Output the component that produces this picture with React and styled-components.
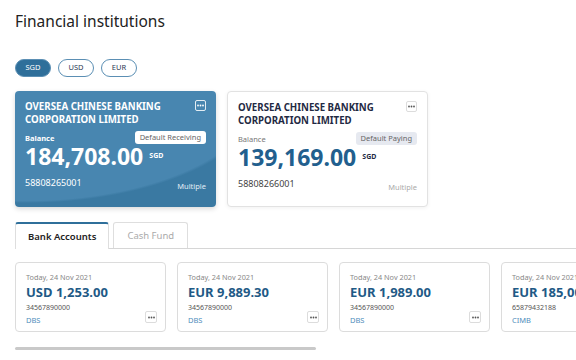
import styled, { createGlobalStyle, css } from 'styled-components'

const Global = createGlobalStyle`
  body {
    margin: 0;
    background: #ffffff;
    font-family: 'Noto Sans', 'DejaVu Sans', sans-serif;
    overflow: hidden;
  }
`

const Page = styled.main`
  width: 576px;
  height: 360px;
  box-sizing: border-box;
  padding: 10px 0 0 15px;
  overflow: hidden;
`

const Title = styled.h1`
  margin: 0;
  font-size: 15.5px;
  font-weight: 400;
  color: #222;
  line-height: 22px;
`

const Pills = styled.div`
  display: flex;
  gap: 7px;
  margin-top: 27px;
`

const Pill = styled.button`
  width: 36px;
  height: 18px;
  border-radius: 9px;
  border: 1.5px solid #5b8fb4;
  background: ${p => (p.$active ? '#2f6f9a' : '#fff')};
  color: ${p => (p.$active ? '#fff' : '#2b3a55')};
  font-family: inherit;
  font-size: 7.5px;
  line-height: 1;
  padding: 0;
`

const Cards = styled.div`
  display: flex;
  gap: 11px;
  margin-top: 14px;
`

const Card = styled.div`
  width: 201px;
  height: 116px;
  box-sizing: border-box;
  border-radius: 4px;
  padding: 8px 10px 0 10px;
  overflow: hidden;
  ${p =>
    p.$primary
      ? css`
          background: radial-gradient(ellipse 240px 112px at 10px 0px, #4886b0 98%, #3a79a2 100%);
          box-shadow: 0 2px 5px rgba(0, 0, 0, 0.15);
          color: #fff;
        `
      : css`
          background: #fff;
          border: 1px solid #e2e2e2;
          box-shadow: 0 1px 4px rgba(0, 0, 0, 0.06);
          color: #1f2a44;
        `}
`

const CardHead = styled.div`
  display: flex;
  justify-content: space-between;
  align-items: flex-start;
  height: 26px;
`

const BankName = styled.div`
  font-size: 9.7px;
  font-weight: 700;
  line-height: 13px;
  margin-top: 1px;
`

const DotsBox = styled.span`
  display: inline-flex;
  align-items: center;
  justify-content: center;
  width: ${p => p.$size || 11}px;
  height: ${p => p.$size || 11}px;
  border-radius: 2px;
  box-sizing: border-box;
  border: 1px solid ${p => (p.$light ? 'rgba(255,255,255,0.85)' : '#dcdcdc')};
  color: ${p => (p.$light ? '#fff' : '#555')};
  background: ${p => (p.$light ? 'transparent' : '#fff')};
  flex-shrink: 0;
  margin-top: ${p => (p.$size ? 0 : 1)}px;
`

const Dots = ({ light, size }) => (
  <DotsBox $light={light} $size={size}>
    <svg width="7" height="3" viewBox="0 0 7 3">
      <circle cx="1" cy="1.5" r="0.9" fill="currentColor" />
      <circle cx="3.5" cy="1.5" r="0.9" fill="currentColor" />
      <circle cx="6" cy="1.5" r="0.9" fill="currentColor" />
    </svg>
  </DotsBox>
)

const BalanceRow = styled.div`
  display: flex;
  justify-content: space-between;
  align-items: center;
  margin-top: 6px;
  height: 13px;
`

const Label = styled.span`
  font-size: 7.5px;
  line-height: 10px;
  font-weight: ${p => (p.$light ? 700 : 400)};
  color: ${p => (p.$light ? '#fff' : '#777')};
`

const Badge = styled.span`
  font-size: 7.5px;
  line-height: 9px;
  padding: 2px 5px;
  border-radius: 3px;
  background: ${p => (p.$light ? '#fff' : '#e6e9f0')};
  color: #666;
`

const Amount = styled.div`
  display: flex;
  align-items: center;
  gap: 6px;
  margin-top: 2px;
  height: 21px;
  font-size: 23px;
  font-weight: 700;
  line-height: 21px;
  color: ${p => (p.$light ? '#fff' : '#225f8e')};
`

const Cur = styled.span`
  font-size: 7px;
  font-weight: 700;
  line-height: 8px;
  color: ${p => (p.$light ? '#fff' : '#1f2a44')};
  margin-bottom: 2px;
`

const CardFoot = styled.div`
  display: flex;
  justify-content: space-between;
  align-items: flex-end;
  margin-top: 10px;
  height: 14px;
`

const AccNo = styled.span`
  font-size: 9px;
  line-height: 10px;
  padding-bottom: 3px;
  color: ${p => (p.$light ? '#fff' : '#444')};
`

const Multi = styled.span`
  font-size: 7.5px;
  line-height: 9px;
  color: ${p => (p.$light ? '#e3eef6' : '#aaa')};
`

const Tabs = styled.div`
  display: flex;
  gap: 4px;
  margin-top: 15px;
  border-bottom: 1px solid #d6d6d6;
`

const Tab = styled.div`
  height: 26px;
  box-sizing: border-box;
  display: flex;
  align-items: center;
  font-size: 9.5px;
  border: 1px solid #dedede;
  border-bottom: none;
  border-radius: 3px 3px 0 0;
  margin-bottom: -1px;
  background: #fff;
  ${p =>
    p.$active
      ? css`
          color: #222;
          font-weight: 600;
          border-top: 2px solid #2f6f9a;
          padding: 0 12px;
          height: 27px;
        `
      : css`
          color: #aaa;
          padding: 0 13px;
        `}
`

const Accounts = styled.div`
  display: flex;
  gap: 11px;
  margin-top: 13px;
`

const Account = styled.div`
  position: relative;
  flex: 0 0 151px;
  height: 70px;
  box-sizing: border-box;
  border: 1px solid #dcdcdc;
  border-radius: 4px;
  padding: 9px 10px;
  background: #fff;
`

const AccDate = styled.div`
  font-size: 7.3px;
  color: #888;
  line-height: 10px;
`

const AccAmount = styled.div`
  font-size: 13px;
  font-weight: 700;
  color: #1f5a86;
  line-height: 18px;
  margin-top: 1px;
  white-space: nowrap;
`

const AccNum = styled.div`
  font-size: 7px;
  color: #555;
  line-height: 10px;
  margin-top: 2px;
`

const AccBank = styled.div`
  font-size: 7.5px;
  color: #4f8dbb;
  line-height: 12px;
  margin-top: 1px;
`

const AccMenu = styled.div`
  position: absolute;
  right: 8px;
  bottom: 8px;
  display: flex;
`

const Scroll = styled.div`
  margin-top: 15px;
  width: 301px;
  height: 3px;
  border-radius: 2px;
  background: #c9c9c9;
`

const accounts = [
  { amount: 'USD 1,253.00', num: '34567890000', bank: 'DBS' },
  { amount: 'EUR 9,889.30', num: '34567890000', bank: 'DBS' },
  { amount: 'EUR 1,989.00', num: '34567890000', bank: 'DBS' },
  { amount: 'EUR 185,000.00', num: '65879432188', bank: 'CIMB' },
]

export default function App() {
  return (
    <Page>
      <Global />
      <Title>Financial institutions</Title>
      <Pills>
        <Pill $active>SGD</Pill>
        <Pill>USD</Pill>
        <Pill>EUR</Pill>
      </Pills>
      <Cards>
        <Card $primary>
          <CardHead>
            <BankName>OVERSEA CHINESE BANKING<br />CORPORATION LIMITED</BankName>
            <Dots light />
          </CardHead>
          <BalanceRow>
            <Label $light>Balance</Label>
            <Badge $light>Default Receiving</Badge>
          </BalanceRow>
          <Amount $light>184,708.00<Cur $light>SGD</Cur></Amount>
          <CardFoot>
            <AccNo $light>58808265001</AccNo>
            <Multi $light>Multiple</Multi>
          </CardFoot>
        </Card>
        <Card>
          <CardHead>
            <BankName>OVERSEA CHINESE BANKING<br />CORPORATION LIMITED</BankName>
            <Dots />
          </CardHead>
          <BalanceRow>
            <Label>Balance</Label>
            <Badge>Default Paying</Badge>
          </BalanceRow>
          <Amount>139,169.00<Cur>SGD</Cur></Amount>
          <CardFoot>
            <AccNo>58808266001</AccNo>
            <Multi>Multiple</Multi>
          </CardFoot>
        </Card>
      </Cards>
      <Tabs>
        <Tab $active>Bank Accounts</Tab>
        <Tab>Cash Fund</Tab>
      </Tabs>
      <Accounts>
        {accounts.map((a, i) => (
          <Account key={i}>
            <AccDate>Today, 24 Nov 2021</AccDate>
            <AccAmount>{a.amount}</AccAmount>
            <AccNum>{a.num}</AccNum>
            <AccBank>{a.bank}</AccBank>
            {i < 3 && (
              <AccMenu>
                <Dots size={12} />
              </AccMenu>
            )}
          </Account>
        ))}
      </Accounts>
      <Scroll />
    </Page>
  )
}
